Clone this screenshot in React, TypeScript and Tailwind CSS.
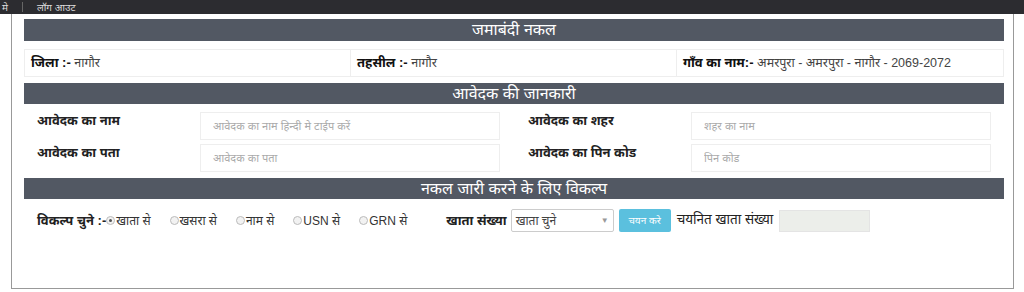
import React, { useState } from 'react';

const font = { fontFamily: '"Liberation Sans", "Noto Sans", "Noto Sans Devanagari", sans-serif' };

const SectionHeader: React.FC<{ title: string; className?: string }> = ({ title, className = '' }) => (
  <div className={`bg-[#525863] text-white text-[16px] leading-none flex items-center justify-center ${className}`}>
    {title}
  </div>
);

interface FieldProps {
  label: string;
  placeholder: string;
}

const Field: React.FC<FieldProps> = ({ label, placeholder }) => (
  <div className="flex items-center">
    <label className="w-[163px] text-[13px] font-bold text-[#222] -mt-[10px]">{label}</label>
    <input
      placeholder={placeholder}
      className="w-[300px] h-[28px] border border-[#eee] px-[12px] text-[11px] placeholder:text-[#aaa] outline-none"
    />
  </div>
);

const options = ['खाता से', 'खसरा से', 'नाम से', 'USN से', 'GRN से'];

export default function App() {
  const [opt, setOpt] = useState(0);

  return (
    <div className="w-full h-[292px] bg-white flex flex-col" style={font}>
      {/* top bar */}
      <div className="h-[14px] bg-[#2c2c30] flex items-center text-[10px] text-[#ddd] shrink-0">
        <span className="pl-[2px]">मे</span>
        <span className="ml-[14px] w-px h-[10px] bg-[#666]" />
        <span className="ml-[14px]">लॉग आउट</span>
      </div>

      {/* main panel */}
      <div className="ml-[11px] w-[1003px] h-[275px] border border-[#999] border-t-0 pl-[12px] pr-[9px] pt-[5px]">
        <SectionHeader title="जमाबंदी नकल" className="h-[22px]" />

        <div className="mt-[8px] h-[28px] grid grid-cols-[326px_326px_1fr] border border-[#eee] text-[13px]">
          <div className="flex items-center px-[6px] border-r border-[#eee]">
            <b className="text-[#111]">जिला :-</b>&nbsp;<span className="text-[#444] text-[12.5px]">नागौर</span>
          </div>
          <div className="flex items-center px-[6px] border-r border-[#eee]">
            <b className="text-[#111]">तहसील :-</b>&nbsp;<span className="text-[#444] text-[12.5px]">नागौर</span>
          </div>
          <div className="flex items-center px-[6px]">
            <b className="text-[#111]">गाँव का नाम:-</b>&nbsp;
            <span className="text-[#444] text-[12.5px]">अमरपुरा - अमरपुरा - नागौर - 2069-2072</span>
          </div>
        </div>

        <SectionHeader title="आवेदक की जानकारी" className="mt-[6px] h-[21px]" />

        <div className="mt-[8px] grid grid-cols-[491px_1fr] gap-y-[4px] pl-[13px]">
          <Field label="आवेदक का नाम" placeholder="आवेदक का नाम हिन्दी मे टाईप करें" />
          <Field label="आवेदक का शहर" placeholder="शहर का नाम" />
          <Field label="आवेदक का पता" placeholder="आवेदक का पता" />
          <Field label="आवेदक का पिन कोड" placeholder="पिन कोड" />
        </div>

        <SectionHeader title="नकल जारी करने के लिए विकल्प" className="mt-[6px] h-[21px]" />

        <div className="mt-[10px] flex items-center pl-[13px] text-[13px] text-[#222]">
          <b>विकल्प चुने :-</b>
          {options.map((o, i) => (
            <label key={o} className="flex items-center mr-[19px] cursor-pointer">
              <span
                onClick={() => setOpt(i)}
                className="w-[9px] h-[9px] rounded-full border border-[#bbb] bg-[#f2f2f2] flex items-center justify-center mr-[1px]"
              >
                {opt === i && <span className="w-[3px] h-[3px] rounded-full bg-[#555]" />}
              </span>
              <span className="text-[12px] text-[#333]">{o}</span>
            </label>
          ))}
          <b className="ml-[20px]">खाता संख्या</b>
          <div className="ml-[4px] w-[103px] h-[23px] border border-[#ccc] rounded-[2px] flex items-center justify-between px-[4px] text-[12px] text-[#444]">
            <span>खाता चुने</span>
            <span className="text-[8px] text-[#999]">▼</span>
          </div>
          <button className="ml-[5px] w-[52px] h-[23px] bg-[#5bc0de] rounded-[2px] text-white text-[10px]">
            चयन करे
          </button>
          <span className="ml-[6px] text-[13.5px] text-[#222]">चयनित खाता संख्या</span>
          <div className="ml-[6px] w-[91px] h-[22px] bg-[#eceeea] border border-[#e4e4e4]" />
        </div>
      </div>
    </div>
  );
}
